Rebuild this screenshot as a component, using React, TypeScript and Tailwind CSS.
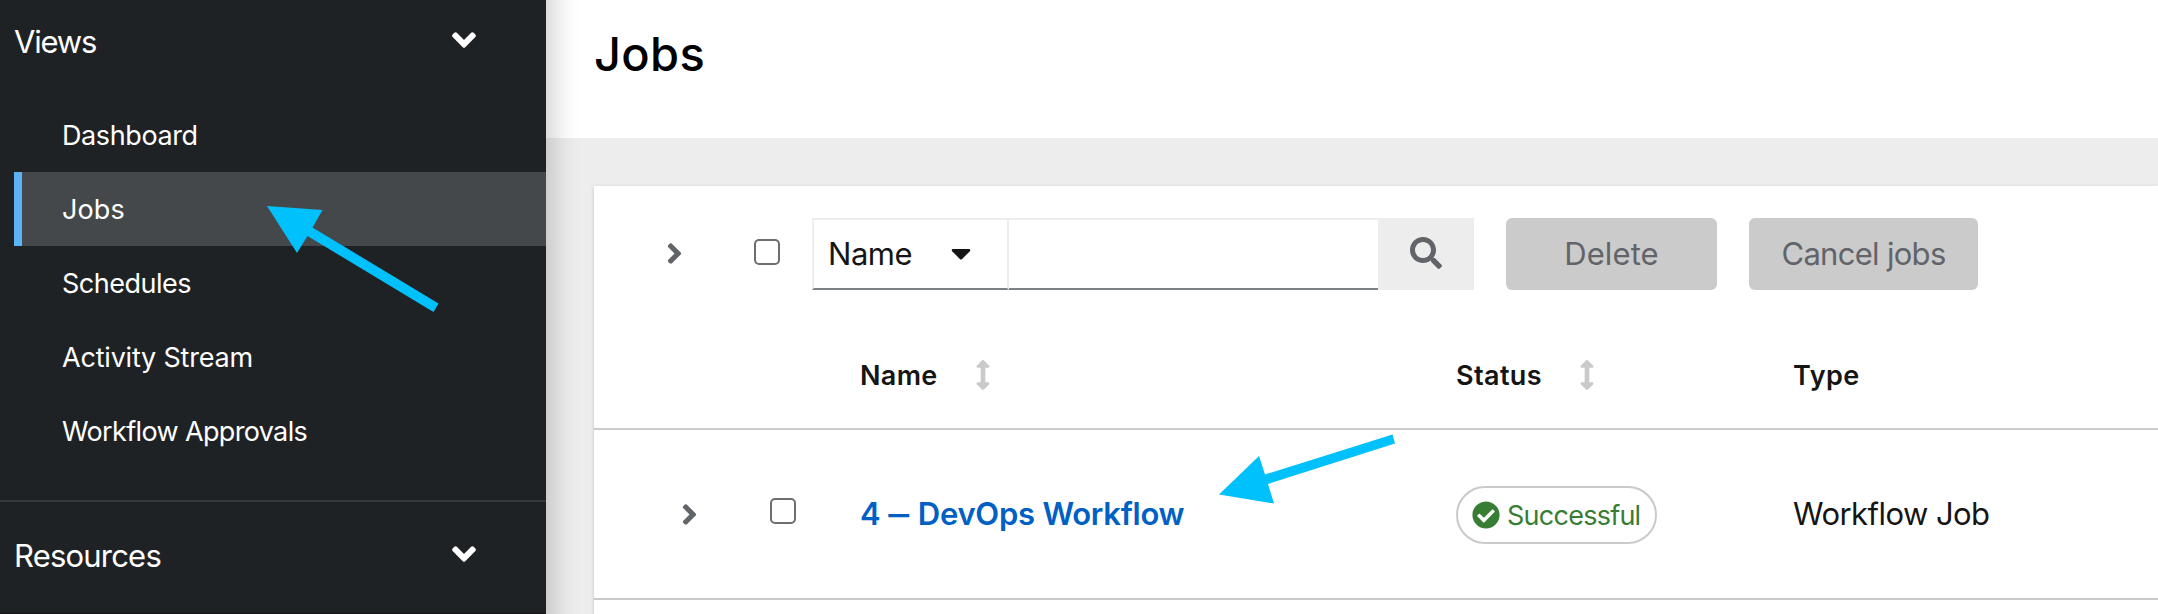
import { FaAngleDown, FaAngleRight, FaArrowsAltV, FaCaretDown, FaCheckCircle, FaSearch } from "react-icons/fa";

const navItems = [
  { label: "Dashboard", spacing: "tracking-[-0.4px]" },
  { label: "Jobs", spacing: "tracking-[0.1px]", active: true },
  { label: "Schedules", spacing: "tracking-[-0.5px]" },
  { label: "Activity Stream", spacing: "tracking-[-0.2px]" },
  { label: "Workflow Approvals", spacing: "tracking-[-0.65px]" },
];

function SectionHeader({ label, spacing }: { label: string; spacing: string }) {
  return (
    <div className="flex h-[70px] items-center justify-between pl-[14px] pr-[63px] text-[31px]">
      <span className={spacing}>{label}</span>
      <FaAngleDown className="size-[38px] -translate-y-px" />
    </div>
  );
}

function Sidebar() {
  return (
    <nav className="relative z-10 -my-[40px] flex w-[546px] shrink-0 flex-col bg-[#1f2225] py-[40px] text-white shadow-[24px_0_24px_-16px_rgba(3,3,3,0.18)]">
      <div className="pt-[6px]">
        <SectionHeader label="Views" spacing="tracking-[-1.2px]" />
      </div>
      <ul className="mt-[22px] pl-[14px]">
        {navItems.map((item) => (
          <li
            key={item.label}
            className={
              item.active
                ? "flex h-[74px] items-center border-l-8 border-[#5cb3f3] bg-[#45484a] pl-[40px] text-[27px]"
                : "flex h-[74px] items-center border-l-8 border-transparent pl-[40px] text-[27px]"
            }
          >
            <span className={item.spacing}>{item.label}</span>
          </li>
        ))}
      </ul>
      <div className="mt-[32px] border-t-2 border-[#35383b] pt-[18px]">
        <SectionHeader label="Resources" spacing="tracking-[-0.8px]" />
      </div>
      <div className="mt-[23px] h-px bg-[#151518]" />
    </nav>
  );
}

function Checkbox() {
  return <span className="block size-[26px] rounded-[5px] border-2 border-[#6e6e6e] bg-white" />;
}

function Toolbar() {
  return (
    <div className="flex h-[136px] items-start pt-[32px]">
      <div className="flex h-[72px] w-[218px] items-center text-[#616469]">
        <FaAngleRight className="ml-[64px] size-[33px] -translate-y-px" />
        <span className="ml-[63px] -translate-y-[2px]">
          <Checkbox />
        </span>
      </div>
      <div className="flex h-[72px]">
        <div className="flex w-[197px] items-center border-2 border-[#ededed] border-b-[#7c8084] pl-[14px] text-[31px] tracking-[-0.45px]">
          <span className="-translate-y-px">Name</span>
          <FaCaretDown className="ml-[33px] size-[32px] -translate-y-px" />
        </div>
        <div className="w-[369px] border-y-2 border-t-[#ededed] border-b-[#7c8084]" />
        <div className="flex w-[96px] items-center justify-center bg-[#ededed] text-[#616469]">
          <FaSearch className="size-[32px] -translate-y-px" />
        </div>
      </div>
      <div className="ml-[32px] flex h-[72px] w-[211px] items-center justify-center rounded-[6px] bg-[#cbcbcb] pb-[2px] text-[31px] tracking-[0.1px] text-[#616469]">
        Delete
      </div>
      <div className="ml-[32px] flex h-[72px] w-[229px] items-center justify-center rounded-[6px] bg-[#cbcbcb] pb-[2px] text-[31px] tracking-[-0.7px] text-[#616469]">
        Cancel jobs
      </div>
    </div>
  );
}

function HeadRow() {
  return (
    <div className="grid h-[108px] grid-cols-[266px_596px_337px_1fr] items-center border-b-2 border-[#cacaca] text-[27px] font-semibold">
      <span />
      <span className="flex items-center tracking-[0.35px]">
        Name
        <FaArrowsAltV className="ml-[30px] size-[30px] text-[#cacaca]" />
      </span>
      <span className="flex items-center tracking-[0.4px]">
        Status
        <FaArrowsAltV className="ml-[30px] size-[30px] text-[#cacaca]" />
      </span>
      <span className="tracking-[0.5px]">Type</span>
    </div>
  );
}

function JobRow() {
  return (
    <div className="grid h-[170px] grid-cols-[266px_596px_337px_1fr] items-center border-b-2 border-[#cacaca] text-[31px]">
      <span className="flex items-center text-[#616469]">
        <FaAngleRight className="ml-[79px] size-[33px]" />
        <span className="ml-[64px] -translate-y-[3px]">
          <Checkbox />
        </span>
      </span>
      <a className="-translate-y-px font-semibold tracking-[-0.25px] text-[#0060c4]">
        4 <span className="mr-[4px] ml-[3px] inline-block scale-x-[1.35]">–</span> DevOps Workflow
      </a>
      <span className="flex h-[58px] w-[201px] translate-y-[1px] items-center rounded-full border-2 border-[#cacaca] pl-[14px] text-[27px] tracking-[-0.75px] text-[#377d33]">
        <FaCheckCircle className="mr-[7px] size-[28px]" />
        Successful
      </span>
      <span className="-translate-y-px tracking-[-0.55px]">Workflow Job</span>
    </div>
  );
}

export default function App() {
  return (
    <div className="relative flex h-[614px] w-full overflow-hidden bg-[#ededed] font-['Inter',sans-serif] leading-none whitespace-nowrap text-[#151515]">
      <Sidebar />
      <main className="flex min-w-0 flex-1 flex-col">
        <header className="h-[138px] bg-white pt-[30px] pl-[48px] text-[47px] font-medium tracking-[0.3px] text-black">
          Jobs
        </header>
        <section className="mt-[48px] ml-[48px] flex-1 bg-white shadow-[0_2px_4px_rgba(3,3,3,0.12),0_0_4px_rgba(3,3,3,0.06)]">
          <Toolbar />
          <HeadRow />
          <JobRow />
        </section>
      </main>
      <svg className="absolute inset-0 z-20 h-[614px] w-[2158px]" viewBox="0 0 2158 614" fill="#00c1fb">
        <path d="M267 206 322.5 210 312.5 227.5 438.5 303.5 433.5 312 307.500 236 297 253Z" />
        <path d="M1219 494.500 1259 456 1265 474.500 1392.500 434.500 1395 443.500 1268 484 1274 503.500Z" />
      </svg>
    </div>
  );
}
